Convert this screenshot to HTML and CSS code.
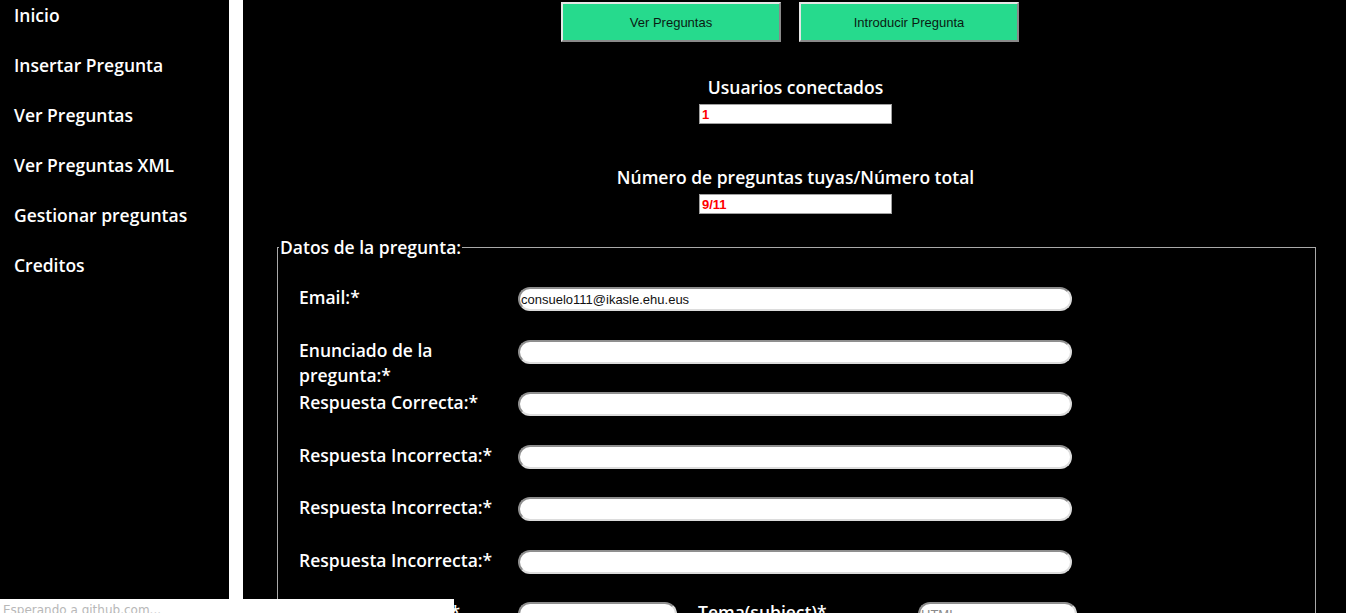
FILE: index.html
```html
<!DOCTYPE html>
<html lang="es">
<head>
<meta charset="utf-8">
<title>Quiz</title>
<link rel="stylesheet" href="styles.css">
</head>
<body>
<nav class="sidebar">
  <ul class="nav">
    <li><a href="#">Inicio</a></li>
    <li><a href="#">Insertar Pregunta</a></li>
    <li><a href="#">Ver Preguntas</a></li>
    <li><a href="#">Ver Preguntas XML</a></li>
    <li><a href="#">Gestionar preguntas</a></li>
    <li><a href="#">Creditos</a></li>
  </ul>
</nav>
<main class="main">
  <div class="actions">
    <button class="btn" type="button">Ver Preguntas</button>
    <button class="btn" type="button">Introducir Pregunta</button>
  </div>
  <div class="stat stat-first">
    <div class="stat-label">Usuarios conectados</div>
    <input class="stat-input" type="text" value="1" readonly>
  </div>
  <div class="stat">
    <div class="stat-label">Número de preguntas tuyas/Número total</div>
    <input class="stat-input" type="text" value="9/11" readonly>
  </div>
  <form class="form">
    <fieldset class="box">
      <legend class="legend">Datos de la pregunta:</legend>
      <div class="rows">
        <label class="lbl">Email:*</label>
        <input class="field" type="text" value="consuelo111@ikasle.ehu.eus">
        <label class="lbl">Enunciado de la pregunta:*</label>
        <input class="field" type="text">
        <label class="lbl">Respuesta Correcta:*</label>
        <input class="field" type="text">
        <label class="lbl">Respuesta Incorrecta:*</label>
        <input class="field" type="text">
        <label class="lbl">Respuesta Incorrecta:*</label>
        <input class="field" type="text">
        <label class="lbl">Respuesta Incorrecta:*</label>
        <input class="field" type="text">
        <label class="lbl">Complejidad(1..3):*</label>
        <div class="split">
          <input class="field field-small" type="text">
          <label class="lbl lbl-inline">Tema(subject)*</label>
          <input class="field field-small" type="text" placeholder="HTML">
        </div>
      </div>
    </fieldset>
  </form>
</main>
<div class="status">Esperando a github.com...</div>
</body>
</html>
```

FILE: styles.css
```css
html, body {
  margin: 0;
  padding: 0;
}

body {
  background: #ffffff;
  display: flex;
  gap: 14px;
  min-height: 100vh;
  font-family: "Comic Sans MS", "Open Sans", sans-serif;
  font-size: 17.5px;
  font-weight: 600;
  color: #ffffff;
}

.sidebar {
  width: 229px;
  flex: none;
  background: #000000;
}

.nav {
  list-style: none;
  margin: 0;
  padding: 3px 0 0 14px;
}

.nav li {
  height: 50px;
  line-height: 25px;
}

.nav a {
  color: #ffffff;
  text-decoration: none;
}

.main {
  flex: 1;
  background: #000000;
  min-height: 800px;
}

.actions {
  display: flex;
  justify-content: center;
  gap: 18px;
  padding: 2px 9px 0 0;
}

.btn {
  width: 220px;
  height: 40px;
  background: #26da8d;
  border-style: solid;
  border-width: 2px;
  border-color: #e6e6e6 #8a8a8a #8a8a8a #e6e6e6;
  font-family: "Liberation Sans", Arial, sans-serif;
  font-size: 13px;
  font-weight: normal;
  color: #0a1a12;
  padding: 0;
}

.stat {
  display: flex;
  flex-direction: column;
  align-items: center;
  margin-top: 41px;
  padding-left: 2px;
}

.stat-first {
  margin-top: 33px;
}

.stat-label {
  line-height: 25px;
  margin-bottom: 4px;
}

.stat-input {
  box-sizing: border-box;
  width: 193px;
  height: 20px;
  margin: 0;
  border: 1px solid #a0a0a0;
  background: #ffffff;
  padding: 0 2px;
  font-family: "Liberation Sans", Arial, sans-serif;
  font-size: 13px;
  font-weight: bold;
  color: #ff0000;
}

.form {
  margin: 21px 30px 0 34px;
}

.box {
  margin: 0;
  border: 1px solid #a9a9a9;
  padding: 25px 0 0 21px;
  min-height: 500px;
}

.legend {
  padding: 0 1px;
  margin-left: -20px;
  line-height: 25px;
}

.rows {
  display: grid;
  grid-template-columns: 219px 554px;
  grid-auto-rows: 52.5px;
  align-items: start;
}

.lbl {
  line-height: 25px;
  padding-right: 10px;
}

.field {
  box-sizing: border-box;
  width: 554px;
  height: 24px;
  margin: 2px 0 0 0;
  border-style: solid;
  border-width: 2px;
  border-color: #8f8f8f #dcdcdc #dcdcdc #8f8f8f;
  border-radius: 12px;
  background: #ffffff;
  padding: 0 1px;
  font-family: "Liberation Sans", Arial, sans-serif;
  font-size: 13px;
  font-weight: normal;
  color: #111111;
}

.field::placeholder {
  color: #8a8a8a;
}

.split {
  display: flex;
  align-items: flex-start;
}

.field-small {
  width: 159px;
  flex: none;
}

.lbl-inline {
  box-sizing: border-box;
  width: 220px;
  flex: none;
  margin-left: 21px;
}

.status {
  position: fixed;
  left: 0;
  bottom: -8px;
  width: 451px;
  height: 22px;
  padding-left: 3px;
  background: #ffffff;
  font-family: "DejaVu Sans", sans-serif;
  font-size: 12px;
  font-weight: normal;
  line-height: 22px;
  color: #b8b8b8;
}
```
